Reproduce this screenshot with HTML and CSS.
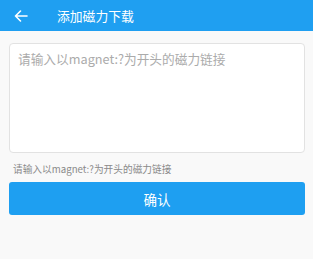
FILE: index.html
```html
<!DOCTYPE html>
<html lang="zh-CN">
<head>
    <meta charset="UTF-8">
    <title>添加磁力下载</title>
    <link rel="stylesheet" href="styles.css">
</head>
<body>

<div class="bar">
    <svg class="back" width="14" height="12" viewBox="0 0 14 12">
        <path d="M13 6H1.5M6.5 1L1.5 6l5 5" fill="none" stroke="#fff" stroke-width="1.6" stroke-linecap="round" stroke-linejoin="round"/>
    </svg>
    <span class="title">添加磁力下载</span>
</div>

<div class="main">
    <div class="box">
        <div class="placeholder">请输入以magnet:?为开头的磁力链接</div>
    </div>
    <p class="hint">请输入以magnet:?为开头的磁力链接</p>
    <div class="btn">确认</div>
</div>

</body>
</html>
```

FILE: styles.css
```css
body { margin: 0; background: #f9f9f9; font-family: "Noto Sans CJK SC", "Noto Sans", sans-serif; }

.bar       { height: 31px; background: #1f9ff1; display: flex; align-items: center; padding-left: 14px; }
.bar .back { display: block; }
.bar .title { color: #fff; font-size: 12.8px; margin-left: 29px; }

.main { padding: 12px 8px 0 9px; }

.box         { height: 110px; background: #fff; border: 1px solid #e2e2e2; border-radius: 4px; padding: 6px 8px; box-sizing: border-box; }
.placeholder { color: #ababab; font-size: 12.7px; line-height: 18px; }

.hint { margin: 8px 0 0 4px; color: #8a8a8a; font-size: 9.7px; line-height: 16px; }

.btn { margin-top: 5px; height: 33px; background: #1e9ff1; border-radius: 3px; color: #fff; font-size: 13.5px; display: flex; align-items: center; justify-content: center; }
```
